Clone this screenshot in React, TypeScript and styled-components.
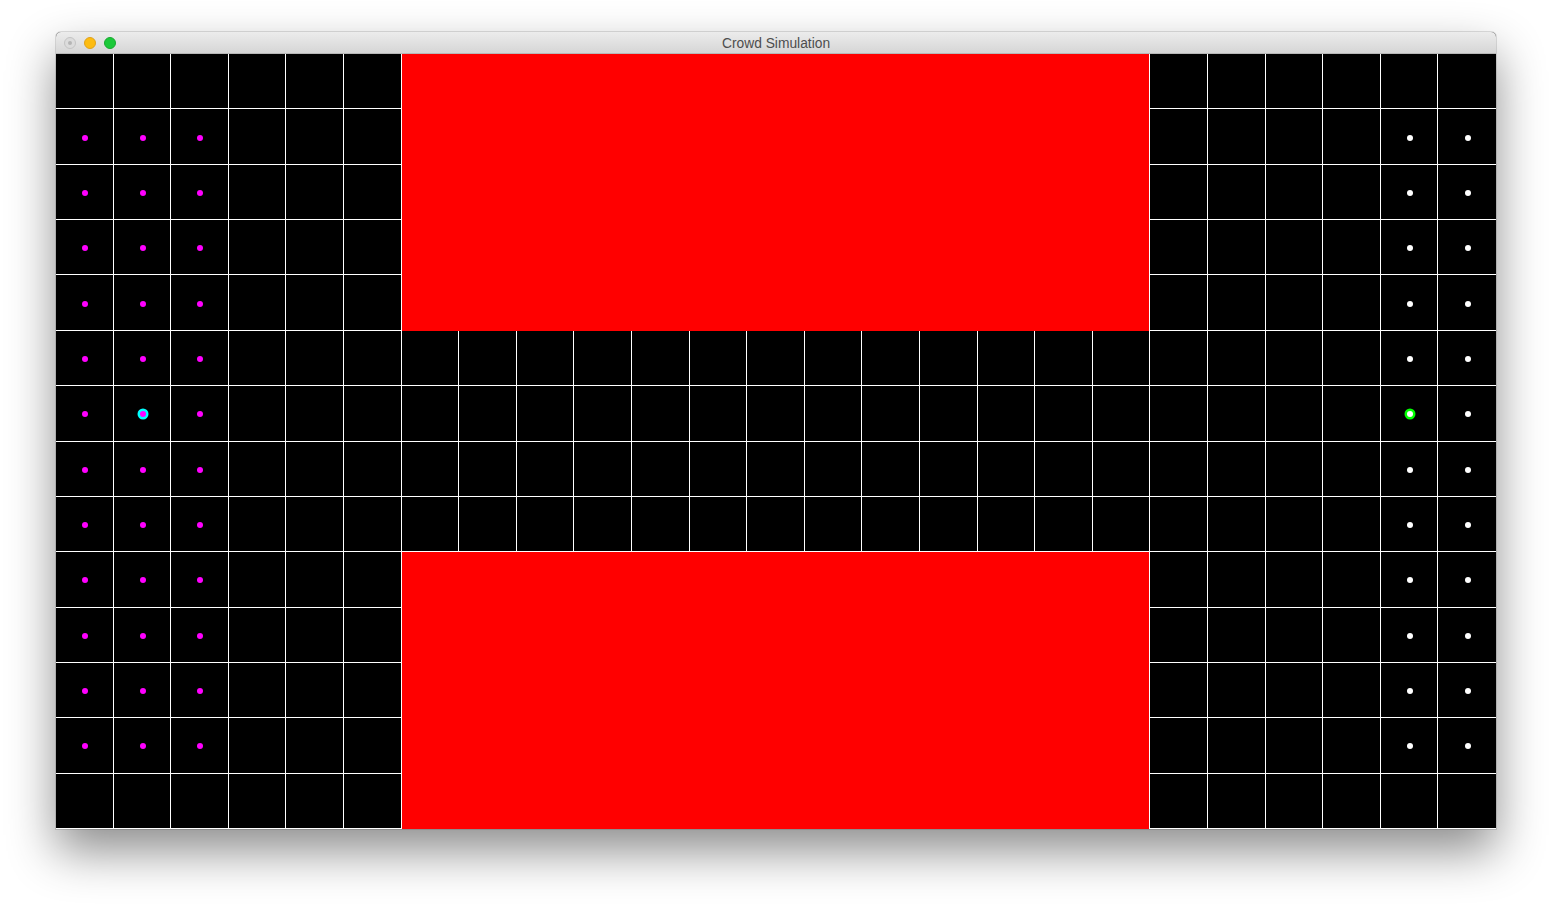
import styled, { createGlobalStyle } from 'styled-components';

const COLS = 25;
const ROWS = 14;

// red obstacles: columns 6..18, rows 0..4 and 9..13
const isObstacle = (r: number, c: number) => c >= 6 && c <= 18 && (r <= 4 || r >= 9);

type Agent = { color: string; ring?: string };

const agentAt = (r: number, c: number): Agent | null => {
    if (r < 1 || r > 12) return null;
    if (c <= 2) return r === 6 && c === 1 ? { color: '#ff00ff', ring: '#00ffff' } : { color: '#ff00ff' };
    if (c >= 23) return r === 6 && c === 23 ? { color: '#ffffff', ring: '#00ff00' } : { color: '#ffffff' };
    return null;
};

const GlobalStyle = createGlobalStyle`
    html, body {
        margin: 0;
        padding: 0;
        background: #ffffff;
    }
`;

const Desktop = styled.div`
    padding: 32px 0 0 56px;
    height: 909px;
    box-sizing: border-box;
`;

const Window = styled.div`
    width: 1440px;
    border-radius: 5px 5px 0 0;
    box-shadow: 0 0 0 1px rgba(0, 0, 0, 0.12), 0 22px 48px rgba(0, 0, 0, 0.45);
    background: #000;
`;

const TitleBar = styled.div`
    position: relative;
    height: 22px;
    display: flex;
    align-items: center;
    justify-content: center;
    padding-top: 1px;
    border-radius: 5px 5px 0 0;
    background: linear-gradient(#ececec, #d6d6d6);
    border-bottom: 1px solid #b8b8b8;
    box-sizing: border-box;
    font-family: "Liberation Sans", Arial, sans-serif;
    font-size: 13.8px;
    color: #4d4d4d;
`;

const Lights = styled.div`
    position: absolute;
    left: 8px;
    top: 5px;
    display: flex;
    gap: 8px;
`;

const Light = styled.span<{ $fill: string; $edge: string }>`
    width: 12px;
    height: 12px;
    border-radius: 50%;
    box-sizing: border-box;
    background: ${p => p.$fill};
    border: 1px solid ${p => p.$edge};
    display: flex;
    align-items: center;
    justify-content: center;
`;

const Pip = styled.span`
    width: 4px;
    height: 4px;
    border-radius: 50%;
    background: #b5b5b5;
`;

const Board = styled.div`
    width: 1440px;
    height: 775px;
    display: grid;
    grid-template-columns: repeat(${COLS}, 1fr);
    grid-template-rows: repeat(${ROWS}, 1fr);
    background: #000;
`;

const Cell = styled.div<{ $last: boolean }>`
    display: flex;
    align-items: center;
    justify-content: center;
    box-shadow: ${p => (p.$last ? 'inset 0 -1px 0 #fff' : 'inset -1px -1px 0 #fff')};
`;

const Obstacle = styled.div<{ $rows: string }>`
    grid-column: 7 / 20;
    grid-row: ${p => p.$rows};
    background: #ff0000;
    box-shadow: inset -1px 0 0 #fff;
`;

const Dot = styled.span<{ $color: string; $ring?: string }>`
    width: 6px;
    height: 6px;
    border-radius: 50%;
    background: ${p => p.$color};
    box-shadow: ${p => (p.$ring ? `0 0 0 2.5px ${p.$ring}` : 'none')};
    margin: 1px 0 0 1px;
`;

export default function App() {
    const cells = [];
    for (let r = 0; r < ROWS; r++) {
        for (let c = 0; c < COLS; c++) {
            if (isObstacle(r, c)) continue;
            const agent = agentAt(r, c);
            cells.push(
                <Cell key={`${r}-${c}`} $last={c === COLS - 1}>
                    {agent && <Dot $color={agent.color} $ring={agent.ring} />}
                </Cell>
            );
        }
    }

    return (
        <Desktop>
            <GlobalStyle />
            <Window>
                <TitleBar>
                    <Lights>
                        <Light $fill="#dcdcdc" $edge="#c4c4c4"><Pip /></Light>
                        <Light $fill="#fdbc11" $edge="#e0a21a" />
                        <Light $fill="#1bc939" $edge="#18a92f" />
                    </Lights>
                    Crowd Simulation
                </TitleBar>
                <Board>
                    <Obstacle $rows="1 / 6" />
                    <Obstacle $rows="10 / 15" />
                    {cells}
                </Board>
            </Window>
        </Desktop>
    );
}
